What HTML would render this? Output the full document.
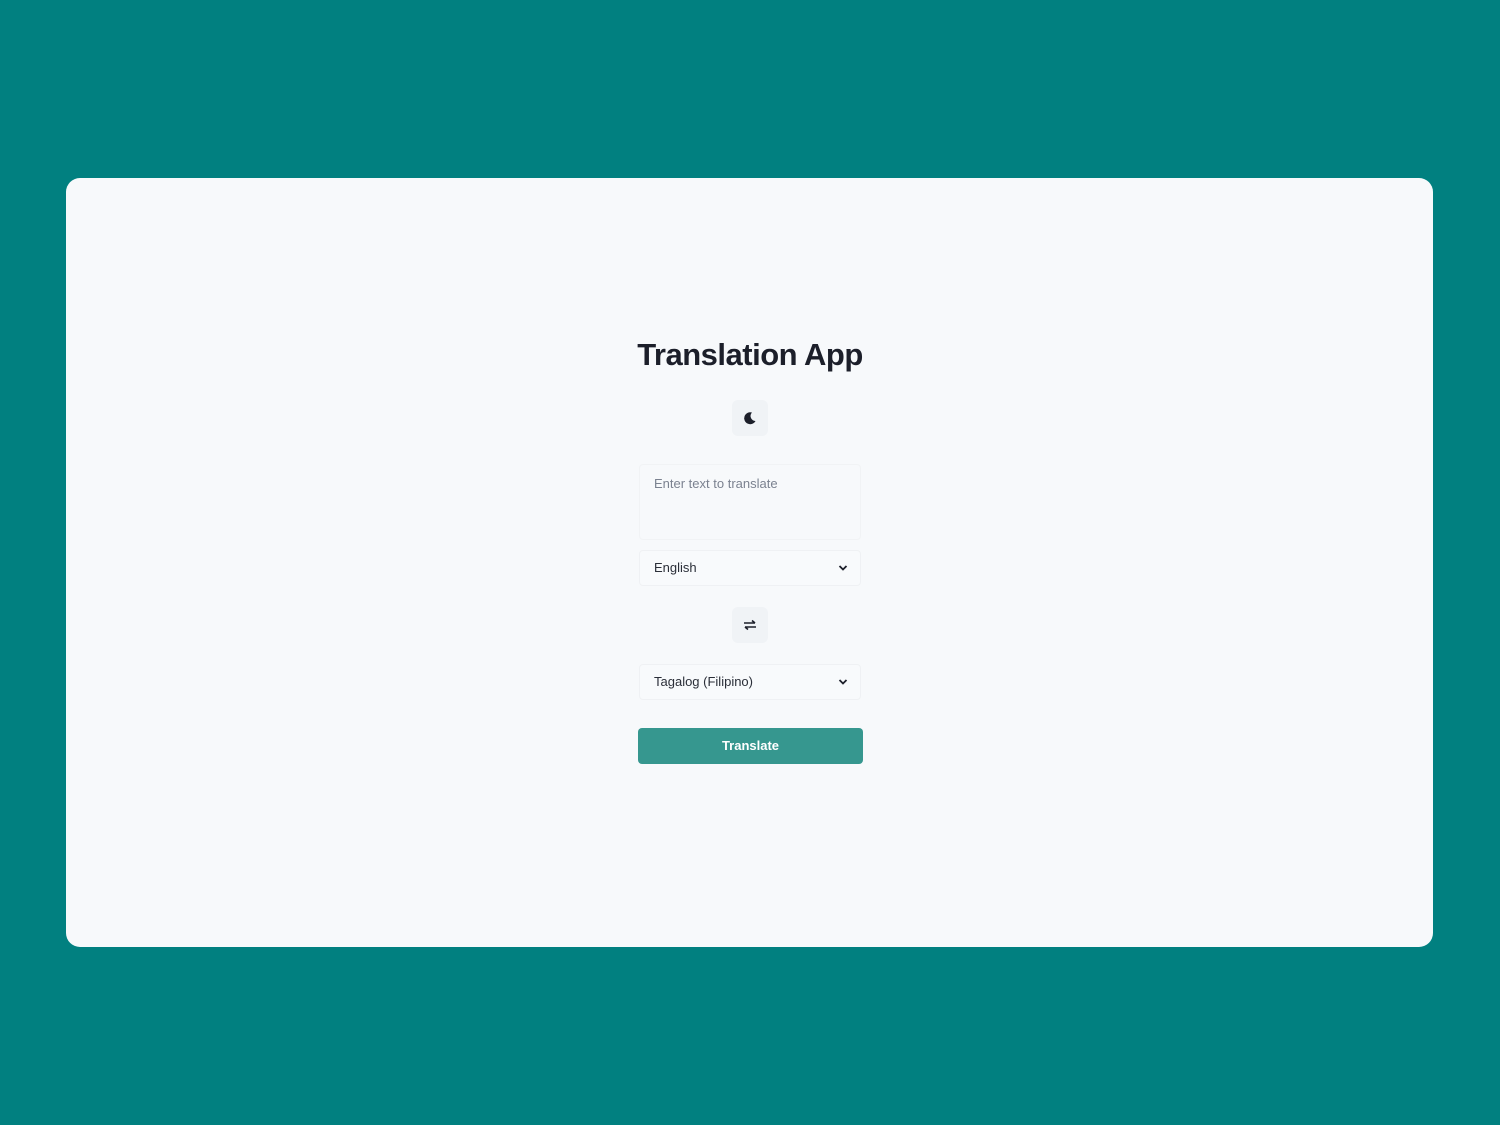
<!DOCTYPE html>
<html><head><meta charset="utf-8"><style>
html,body{margin:0;padding:0;width:1500px;height:1125px;background:#018080;font-family:"Liberation Sans",sans-serif;overflow:hidden}
.card{position:absolute;left:66px;top:178px;width:1367px;height:769px;background:#f7f9fb;border-radius:14px}
h1{position:absolute;left:0;width:1500px;top:337px;margin:0;text-align:center;font-size:31px;font-weight:700;color:#1c1f2a;letter-spacing:-0.5px}
.ib{position:absolute;left:732px;width:36px;height:36px;background:#f0f3f6;border-radius:6px}
.ib svg{position:absolute;left:9px;top:9px}
.ta{position:absolute;left:639px;top:464px;width:222px;height:76px;border:1px solid #f1f3f5;border-radius:4px;box-sizing:border-box}
.ta span{position:absolute;left:14px;top:11px;font-size:13px;color:#7b8290}
.sel{position:absolute;left:639px;width:222px;height:36px;border:1px solid #eff1f4;border-radius:4px;box-sizing:border-box;background:#f8fafc}
.sel span{position:absolute;left:14px;top:9px;font-size:13px;color:#2a2e38}
.sel svg{position:absolute;right:12px;top:13px}
.btn{position:absolute;left:638px;top:728px;width:225px;height:36px;background:#36978f;border-radius:4px;color:#fff;font-size:13px;font-weight:700;text-align:center;line-height:36px}
</style></head><body>
<div class="card"></div>
<h1>Translation App</h1>
<div class="ib" style="top:400px"><svg width="18" height="18" viewBox="0 0 18 18"><path d="M11 3.5A6 6 0 1 0 14.5 12 5 5 0 0 1 11 3.5Z" fill="#1c1f2a"/></svg></div>
<div class="ta"><span>Enter text to translate</span></div>
<div class="sel" style="top:550px"><span>English</span><svg width="10" height="8" viewBox="0 0 10 8"><path d="M1.5 2L5 5.5 8.5 2" stroke="#1c1f2a" stroke-width="1.8" fill="none"/></svg></div>
<div class="ib" style="top:607px"><svg width="18" height="18" viewBox="0 0 18 18"><path d="M3 7h11M11 4.5l3 2.5M15 11H4M7 13.5L4 11" stroke="#1c1f2a" stroke-width="1.6" fill="none"/></svg></div>
<div class="sel" style="top:664px"><span>Tagalog (Filipino)</span><svg width="10" height="8" viewBox="0 0 10 8"><path d="M1.5 2L5 5.5 8.5 2" stroke="#1c1f2a" stroke-width="1.8" fill="none"/></svg></div>
<div class="btn">Translate</div>
</body></html>
